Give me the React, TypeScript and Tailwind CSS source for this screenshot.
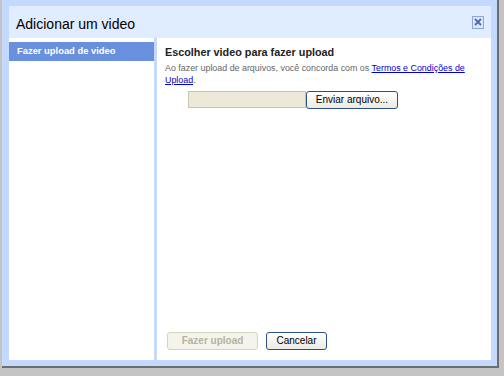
const CloseIcon = () => (
  <svg width="8" height="8" viewBox="0 0 8 8">
    <path d="M1 1 L7 7 M7 1 L1 7" stroke="#4d6cad" strokeWidth="1.8" />
  </svg>
);

export default function App() {
  return (
    <div className="w-[504px] h-[376px] bg-[#c4c4c4] font-['Liberation_Sans',Arial,sans-serif] overflow-hidden">
      <div className="ml-[2px] w-[497px] h-[368px] border-r-2 border-b-2 border-[#6e6e6e]">
        <div className="w-[495px] h-[366px] bg-[#c3d9ff] pl-[7px] pr-[6px] pt-[6px] pb-[6px] flex flex-col">
          {/* title bar */}
          <div className="h-[32px] bg-[#e0ecff] flex items-center justify-between pl-[7px] pr-[7px]">
            <span className="text-[14px] text-black leading-none pt-[4px]">Adicionar um video</span>
            <button className="w-[12px] h-[13px] border border-[#8ea7d6] bg-[#dce7fb] flex items-center justify-center">
              <CloseIcon />
            </button>
          </div>

          {/* body */}
          <div className="flex-1 flex gap-[3px]">
            <div className="w-[145px] bg-white pt-[4px]">
              <div className="h-[19px] bg-[#6990de] text-white font-bold text-[9.4px] flex items-center pl-[8px]">
                Fazer upload de video
              </div>
            </div>

            <div className="flex-1 bg-white pl-[8px] pr-[8px] pt-[8px] pb-[10px] flex flex-col">
              <h2 className="text-[10.8px] font-bold leading-[13px] text-[#222]">
                Escolher video para fazer upload
              </h2>
              <p className="mt-[3px] text-[8.9px] leading-[12px] text-[#666] w-[305px]">
                Ao fazer upload de arquivos, você concorda com os{" "}
                <a className="text-[#0000cc] underline">Termos e Condições de Upload</a>.
              </p>
              <div className="mt-[5px] ml-[23px] flex">
                <div className="w-[118px] h-[17px] bg-[#ece9d8] border border-[#c8c5b4]" />
                <button className="w-[92px] h-[18px] border border-[#2c4f86] rounded-[3px] bg-gradient-to-b from-white to-[#ebeae3] text-[10px] text-black leading-none">
                  Enviar arquivo...
                </button>
              </div>

              <div className="mt-auto ml-[2px] flex gap-[8px]">
                <button className="w-[91px] h-[18px] border border-[#d6d2c2] rounded-[3px] bg-[#f5f4ea] text-[10px] font-bold text-[#b5b2a3] leading-none">
                  Fazer upload
                </button>
                <button className="w-[61px] h-[18px] border border-[#2c4f86] rounded-[3px] bg-gradient-to-b from-white to-[#ebeae3] text-[10px] text-black leading-none">
                  Cancelar
                </button>
              </div>
            </div>
          </div>
        </div>
      </div>
    </div>
  );
}
